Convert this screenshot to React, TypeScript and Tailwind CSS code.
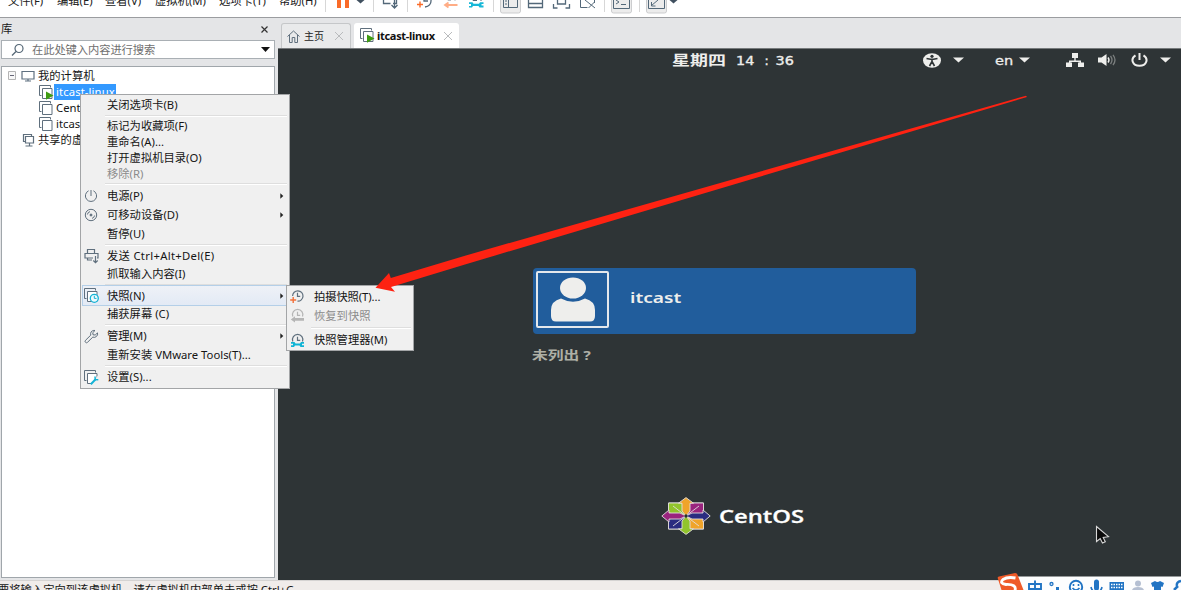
import type { ReactNode } from "react";

const slate = "#5f6f7d";

function Stack({ mark }: { mark?: "play" | "clock" | "wrench" }) {
  return (
    <svg width="15" height="15" viewBox="0 0 15 15" fill="none" stroke={slate} className="block shrink-0">
      <path d="M2.500 10.500H.500V.500h11v2" />
      <path d="M3.500 3.500h9.500v10H3.500z" fill="#fff" />
      {mark === "play" && <path d="M7 6.500l7.500 4L7 14.700z" fill="#3f9c12" stroke="none" />}
      {mark === "clock" && (
        <>
          <circle cx="10.3" cy="10.3" r="4" fill="#eefafd" stroke="#14b3d6" strokeWidth="1.3" />
          <path d="M10.3 7.8v2.6h2.2" stroke="#14b3d6" />
        </>
      )}
      {mark === "wrench" && (
        <>
          <path d="M14.5 5v10H6z" fill="#f0f0f0" stroke="none" />
          <path d="M6.8 14.2l4.8-5" stroke="#14b3d6" strokeWidth="2" />
          <path d="M11 6.5l.3 3 3 .3" stroke="#14b3d6" strokeWidth="1.5" />
        </>
      )}
    </svg>
  );
}

function Clock({ kind }: { kind: "plus" | "back" | "wrench" }) {
  const c = kind === "back" ? "#b5b5b5" : slate;
  return (
    <svg width="15" height="15" viewBox="0 0 15 15" fill="none" className="block">
      {kind === "plus" ? (
        <path d="M2.600 7A5.200 5.200 0 1 1 7.500 12.200" stroke={c} strokeWidth="1.2" />
      ) : (
        <path d="M2.800 8.500A5.200 5.200 0 1 1 12.500 8.500" stroke={c} strokeWidth="1.2" />
      )}
      <path d="M7.500 3.800v3.600h2.700" stroke={c} strokeWidth="1.2" />
      {kind === "plus" && <path d="M3.2 8v6M.2 11h6" stroke="#f2703a" strokeWidth="1.4" />}
      {kind === "back" && <path d="M14 10H5V8.300L.8 11.500 5 14.500v-1.800h9z" fill="#b5b5b5" />}
      {kind === "wrench" && (
        <path d="M1 9h3.500l1 1.400h4.500l1-1.400h3v1.800h-2v1.400h2v1.800h-3.500l-1-1.400H5l-1 1.400H1v-1.800h2v-1.400H1z" fill="#10b4d5" />
      )}
    </svg>
  );
}

function PowerIcon() {
  return (
    <svg width="14" height="14" viewBox="0 0 14 14" fill="none" stroke={slate} className="block">
      <path d="M4.600 1.800a5.600 5.600 0 1 0 4.800 0M7 1v6" />
    </svg>
  );
}

function DiscIcon() {
  return (
    <svg width="14" height="14" viewBox="0 0 14 14" fill="none" stroke={slate} className="block">
      <circle cx="7" cy="7" r="5.700" />
      <circle cx="7" cy="7" r="1" fill={slate} />
      <path d="M3.400 6.500A3.600 3.600 0 0 1 6 3.600M10.600 7.500A3.600 3.600 0 0 1 8 10.400" />
    </svg>
  );
}

function SendIcon() {
  return (
    <svg width="15" height="16" viewBox="0 0 15 16" fill="none" stroke={slate} strokeWidth="1.200" className="block">
      <path d="M3.500 5.500v-4h7v4M9 10H1V5.500h13V10h-1M11.500 8v6.500M9.300 12.500l2.200 2.200 2.200-2.200M3.500 10v2h4.500" />
    </svg>
  );
}

function WrenchIcon() {
  return (
    <svg width="15" height="15" viewBox="0 0 15 15" fill="none" stroke={slate} className="block">
      <path d="M9.800 1.400a3.500 3.500 0 0 0-3 4.700L1.500 11.300a1.400 1.400 0 0 0 2 2L8.800 8.100a3.500 3.500 0 0 0 4.700-4.200L11.200 6 9 5.800 8.800 3.600l2.200-2.100z" />
    </svg>
  );
}

function Item({
  h,
  icon,
  arrow,
  off,
  hot,
  tone = "",
  children,
}: {
  h: string;
  icon?: ReactNode;
  arrow?: boolean;
  off?: boolean;
  hot?: boolean;
  tone?: string;
  children: ReactNode;
}) {
  return (
    <div
      className={`flex shrink-0 items-center ${h} ${
        hot ? "bg-linear-to-b from-[#eef1f7] to-[#e3eaf5] shadow-[0_0_0_1px_#b4cfe8]" : ""
      }`}
    >
      <div className="flex w-6 shrink-0 items-center pl-px">{icon}</div>
      <div className={`min-w-0 flex-1 ${off ? "text-[#8b8b8b]" : "text-[#151515]"} ${tone}`}>
        <span className="whitespace-nowrap">{children}</span>
      </div>
      {arrow && (
        <svg width="4" height="6" viewBox="0 0 4 6" className="mr-[3px]">
          <path d="M.300.300l3 2.700-3 2.700z" fill="#222" />
        </svg>
      )}
    </div>
  );
}

function Sep({ h }: { h: string }) {
  return (
    <div className={`flex shrink-0 items-center ${h}`}>
      <div className="ml-[22px] h-[2px] flex-1 border-t border-[#dedede] bg-white" />
    </div>
  );
}

function ContextMenu() {
  return (
    <div className="absolute left-[80px] top-[94px] flex h-[295px] w-[210px] flex-col border border-[#a3a5a7] bg-[#f0f0f0] px-[2px] pt-px">
      <Item h="h-[17px]">关闭选项卡(B)</Item>
      <Sep h="h-[5px]" />
      <Item h="h-[16px]">标记为收藏项(F)</Item>
      <Item h="h-[16px]">重命名(A)...</Item>
      <Item h="h-[16px]">打开虚拟机目录(O)</Item>
      <Item h="h-[16px]" off>移除(R)</Item>
      <Sep h="h-[4px]" />
      <Item h="h-[19px]" icon={<PowerIcon />} arrow>电源(P)</Item>
      <Item h="h-[20px]" icon={<DiscIcon />} arrow>可移动设备(D)</Item>
      <Item h="h-[17px]">暂停(U)</Item>
      <Sep h="h-[5px]" />
      <Item h="h-[18px]" icon={<SendIcon />} tone="tracking-[0.3px]">发送 Ctrl+Alt+Del(E)</Item>
      <Item h="h-[18px]">抓取输入内容(I)</Item>
      <Sep h="h-[3px]" />
      <Item h="h-[19px]" icon={<Stack mark="clock" />} arrow hot>快照(N)</Item>
      <Item h="h-[18px]">捕获屏幕 (C)</Item>
      <Sep h="h-[4px]" />
      <Item h="h-[18px]" icon={<WrenchIcon />} arrow>管理(M)</Item>
      <Item h="h-[19px]">重新安装 VMware Tools(T)...</Item>
      <Sep h="h-[4px]" />
      <Item h="h-[18px]" icon={<Stack mark="wrench" />}>设置(S)...</Item>
    </div>
  );
}

function SubMenu() {
  return (
    <div className="absolute left-[286px] top-[285px] flex h-[66px] w-[128px] flex-col border border-[#a3a5a7] bg-[#f0f0f0] px-[2px] pt-px">
      <Item h="h-[19px]" tone="pl-px tracking-[-0.1px]" icon={<Clock kind="plus" />}>拍摄快照(T)...</Item>
      <Item h="h-[19px]" tone="pl-px" off icon={<Clock kind="back" />}>恢复到快照</Item>
      <Sep h="h-[6px]" />
      <Item h="h-[18px]" tone="pl-px" icon={<Clock kind="wrench" />}>快照管理器(M)</Item>
    </div>
  );
}

function MenuBar() {
  return (
    <header className="flex h-[18px] shrink-0 overflow-hidden border-b border-[#9b9da0] bg-white">
      <nav className="-mt-[8px] flex h-[18px] w-[320px] shrink-0 items-center whitespace-nowrap pl-[8px] text-[#202020]">
        <span className="w-[49px]">文件(F)</span>
        <span className="w-[48px]">编辑(E)</span>
        <span className="w-[50px]">查看(V)</span>
        <span className="w-[64px]">虚拟机(M)</span>
        <span className="w-[60px]">选项卡(T)</span>
        <span>帮助(H)</span>
      </nav>
      <svg width="380" height="17" viewBox="320 0 380 17" fill="none" stroke="#536879" className="block shrink-0">
        <path d="M325.500 0v12M373.500 0v12M407.500 0v12M493.500 0v12M604.500 0v12M639.500 0v12" stroke="#d7d7d7" />
        <path d="M337 0h4v8h-4zM345 0h4v8h-4z" fill="#fa6b28" stroke="none" />
        <path d="M356.500 0h8L360.500 3.500z" fill="#405060" stroke="none" />
        <path d="M383.500 0v3.500h7M393 3.500h3.500V0M394.500 0v7.500M391.500 5l3 3 3-3" strokeWidth="1.300" />
        <path d="M425 7q6.500-1 6-7M424 0v1h4" strokeWidth="1.300" />
        <path d="M420 1.500v6M417 4.500h6" stroke="#fa6b28" strokeWidth="1.400" />
        <path d="M457.500 5H446M448.500 2.500L445 5l3.500 2.500" stroke="#ffad86" strokeWidth="1.800" />
        <path d="M448 0v.5h3M455 0v1" stroke="#b8c0c8" />
        <path d="M469 2.300h3.500l1 1.500h5.500l1-1.500h3.500v1.700h-2v1.500h2v2h-4l-1-1.500H473l-1 1.500h-3V6h2V4h-2z" fill="#17b8d8" stroke="none" />
        <path d="M473 0v.5h4M481 0v1" />
        <path d="M500.500-2v13a2 2 0 0 0 2 2h16a2 2 0 0 0 2-2V-2z" fill="#ececec" stroke="#cccdcf" />
        <path d="M503.500-2v9.500h14V-2M508.500-2v9.500M505 1h2M505 4h2" />
        <path d="M528.500-2v9.500h14V-2M528.500 3.500h14" strokeWidth="1.300" />
        <path d="M553.500 4v4h4M569.500 4v4h-4M557.500-2v6h8v-6" strokeWidth="1.300" />
        <path d="M587.500 7.500h-7V-2M585 0l10 8M594.500 0v3M594.500 2l-6 6" />
        <path d="M611.500-2v13a2 2 0 0 0 2 2h16a2 2 0 0 0 2-2V-2z" fill="#ececec" stroke="#cccdcf" />
        <path d="M613.500-2v10.500h16V-2M616 0l3 2-3 2M621 4.500h5" />
        <path d="M646.500-2v13a2 2 0 0 0 2 2h16a2 2 0 0 0 2-2V-2z" fill="#ececec" stroke="#cccdcf" />
        <path d="M648.500-2v10.500h16V-2M651.500 5.500L658 0M651.500 2v4h4" />
        <path d="M669.500 0h8l-4 3.500z" fill="#405060" stroke="none" />
      </svg>
    </header>
  );
}

function Library() {
  return (
    <aside className="flex w-[278px] shrink-0 flex-col pb-[2px] pl-px pr-[3px]">
      <div className="flex h-[22px] items-center justify-between pr-[6px] text-[#202020]">
        <span>库</span>
        <svg width="9" height="9" viewBox="0 0 9 9" stroke="#333" strokeWidth="1.200">
          <path d="M1.500 1.500l6 6M7.500 1.500l-6 6" />
        </svg>
      </div>
      <div className="flex h-[19px] shrink-0 items-center border border-[#a9afb4] bg-white pl-[9px] pr-[4px]">
        <svg width="14" height="14" viewBox="0 0 14 14" fill="none" stroke="#546675" strokeWidth="1.200">
          <circle cx="8" cy="5.500" r="4" />
          <path d="M5 8.500L1 12.500" />
        </svg>
        <span className="ml-[7px] flex-1 tracking-[-0.1px] text-[#707070]">在此处键入内容进行搜索</span>
        <svg width="9" height="5" viewBox="0 0 9 5">
          <path d="M0 0h9L4.500 5z" fill="#111" />
        </svg>
      </div>
      <div className="mt-[7px] flex min-h-0 flex-1 flex-col border border-[#a0a6ab] bg-white">
        <div className="flex h-[17px] items-center pl-[6px]">
          <svg width="9" height="9" viewBox="0 0 9 9" fill="#f8f8f8" stroke="#b5b5b5">
            <path d="M.500.500h7v8h-7z" />
            <path d="M2 4.500h4" stroke="#667" />
          </svg>
          <svg width="14" height="12" viewBox="0 0 14 12" fill="none" stroke="#5f7080" className="ml-[4px]">
            <path d="M1 1.500h12v7.500H1zM4 11h6M7 9v2" strokeWidth="1.200" />
          </svg>
          <span className="ml-[3px]">我的计算机</span>
        </div>
        <div className="flex h-[16px] items-center pl-[37px]">
          <Stack mark="play" />
          <span className="h-[16px] w-[62px] whitespace-nowrap bg-[#3399ff] pl-[2px] leading-[15px] tracking-[0.1px] text-white">itcast-linux</span>
        </div>
        <div className="flex h-[16px] items-center pl-[37px]">
          <Stack />
          <span className="ml-[2px]">CentOS 7</span>
        </div>
        <div className="flex h-[16px] items-center pl-[37px]">
          <Stack />
          <span className="ml-[2px]">itcast</span>
        </div>
        <div className="flex h-[16px] items-center pl-[20px]">
          <svg width="13" height="14" viewBox="0 0 13 14" fill="none" stroke={slate} strokeWidth="1.200">
            <path d="M3.500 8.500h-2V1.500h8v2M3.500 3.500h8v6.500h-8zM7.500 10v2.500M3.500 13h7" />
          </svg>
          <span className="ml-[3px]">共享的虚拟机</span>
        </div>
      </div>
    </aside>
  );
}

function HomeIcon() {
  return (
    <svg width="13" height="13" viewBox="0 0 13 13" fill="none" stroke={slate}>
      <path d="M.500 6.500L6.500 1l6 5.500M2.500 5v7.500h2.700V7.500h2.600v5h2.700V5" />
    </svg>
  );
}

function CloseX() {
  return (
    <svg width="10" height="10" viewBox="0 0 10 10" stroke="#b9bbbd">
      <path d="M1 1l8 8M9 1L1 9" />
    </svg>
  );
}

function Tabs() {
  return (
    <div className="flex h-[30px] shrink-0 items-end">
      <div className="ml-[3px] flex h-[25px] w-[70px] items-center rounded-t-[3px] border border-b-0 border-[#c5c7c9] bg-[#e9eaeb] pl-[5px] text-[#222]">
        <HomeIcon />
        <span className="ml-[4px] flex-1 text-[10px]">主页</span>
        <span className="mr-[6px]"><CloseX /></span>
      </div>
      <div className="ml-[3px] flex h-[25px] w-[105px] items-center rounded-t-[3px] bg-white pl-[6px]">
        <Stack mark="play" />
        <span className="ml-[2px] flex-1 text-[11px] font-bold tracking-[-0.300px] text-[#111]">itcast-linux</span>
        <span className="mr-[6px]"><CloseX /></span>
      </div>
    </div>
  );
}

function Caret() {
  return (
    <svg width="11" height="6" viewBox="0 0 11 6" className="block shrink-0">
      <path d="M0 .500h11L5.500 5.500z" fill="#eeeeec" />
    </svg>
  );
}

function CentLogo() {
  return (
    <svg width="50" height="38" viewBox="0 0 50 38" className="block" stroke="#e2dedd" strokeWidth=".9">
      <path d="M7.500 6H42.500V32H7.500z" fill="#2e3436" />
      <path d="M7.500 6H21L25 19 7.500 16z" fill="#91c42c" />
      <path d="M29 6h13.500v10L25 19z" fill="#9a247e" />
      <path d="M7.500 22L25 19l-4 13H7.500z" fill="#2b2c80" />
      <path d="M25 19l17.500 3v10H29z" fill="#f0a42a" />
      <path d="M25 19l-4-5V6.200h-3.500L25 .6l7.500 5.600H29V14z" fill="#f0a42a" />
      <path d="M25 19l-4 5v7.800h-3.500L25 37.400l7.500-5.600H29V24z" fill="#91c42c" />
      <path d="M25 19l-6-3H8v-3L.8 19 8 25v-3h11z" fill="#9a247e" />
      <path d="M25 19l6-3h11v-3l7.200 6-7.200 6v-3H31z" fill="#2b2c80" />
      <path d="M12 9l13 10L38 9M12 29l13-10 13 10" fill="none" />
      <circle cx="25" cy="19" r="1.700" fill="#26312f" stroke="none" />
    </svg>
  );
}

function GuestScreen() {
  return (
    <section className="flex min-h-0 flex-1 flex-col border-t border-[#767a7c] bg-[#2e3436] text-[#eeeeec]">
      <div className="flex h-[22px] shrink-0 items-center">
        <div className="ml-[394px] flex w-[251px] items-center whitespace-nowrap">
          <span className="inline-block w-[64px] origin-left scale-x-[1.33] text-[13.500px] font-bold leading-[21px]">星期四</span>
          <span className="flex w-[58px] justify-between font-['DejaVu_Sans'] text-[12.500px] leading-[21px] [-webkit-text-stroke:0.350px_#eeeeec]">
            <span className="inline-block origin-left scale-x-[1.150]">14</span>
            <span className="pl-[3px]">:</span>
            <span className="inline-block origin-right scale-x-[1.150]">36</span>
          </span>
        </div>
        <svg width="18" height="15" viewBox="0 0 18 15" className="block">
          <ellipse cx="9" cy="7.500" rx="9" ry="7.300" fill="#eeeeec" />
          <circle cx="9" cy="3.300" r="1.600" fill="#2e3436" />
          <path d="M3.500 5.500l4 .8h3l4-.8M9 6v3.500M9 8.500L6.500 13M9 8.500l2.500 4.500" stroke="#2e3436" strokeWidth="1.600" fill="none" />
        </svg>
        <span className="ml-[12px]"><Caret /></span>
        <span className="ml-[31px] w-[21px] origin-left font-['DejaVu_Sans'] text-[13px] leading-none [-webkit-text-stroke:0.300px_#eeeeec] scale-x-[1.120]">en</span>
        <span className="ml-[3px]"><Caret /></span>
        <svg width="18" height="14" viewBox="0 0 18 14" className="ml-[36px] block" fill="#eeeeec">
          <path d="M6 0h6v5H9.700v2.500H15v2h3V14h-6V9.500h1.500V9h-9v.5H6V14H0V9.500h3v-2h5.300V5H6z" />
        </svg>
        <svg width="18" height="12" viewBox="0 0 18 12" className="ml-[14px] block" fill="none" stroke="#eeeeec">
          <path d="M0 3.500h3.500L8.500 0v12l-5-3.500H0z" fill="#eeeeec" stroke="none" />
          <path d="M10 3.500q2 2.500 0 5" strokeWidth="1.400" />
          <path d="M12.500 2q3 4 0 8M15 .8q4 5.200 0 10.400" opacity=".4" strokeWidth="1.300" />
        </svg>
        <svg width="17" height="14" viewBox="0 0 17 14" className="ml-[15px] block" fill="none" stroke="#eeeeec" strokeWidth="2">
          <path d="M4.500 2.300C-1 6 1.500 12.800 8.500 12.800S18 6 12.500 2.300M8.500 0v7" />
        </svg>
        <span className="ml-[12px]"><Caret /></span>
      </div>
      <div className="ml-[255px] mt-[197px] flex h-[66px] w-[383px] shrink-0 items-center rounded-[4px] bg-[#215d9c] pl-[3px]">
        <div className="mb-[4px] flex h-[57px] w-[73px] items-center justify-center rounded-[2px] border-2 border-[#e4e8ec]">
          <svg width="44" height="45" viewBox="0 0 44 45" fill="#eeeeec">
            <ellipse cx="22" cy="11" rx="13" ry="10.500" />
            <path d="M0 39V33Q0 24 10 21.500Q22 28 34 21.500Q44 24 44 33V39Q44 44.500 39 44.500H5Q0 44.500 0 39Z" />
          </svg>
        </div>
        <span className="mb-[7px] ml-[21px] inline-block origin-left scale-x-[1.280] font-['Noto_Sans'] text-[15px] font-semibold">itcast</span>
      </div>
      <div className="ml-[254px] mt-[12px] h-[20px] shrink-0 whitespace-nowrap text-[#aeb0a6]">
        <span className="inline-block origin-left scale-x-[1.260] text-[12.500px] font-bold leading-[20px]">未列出 ?</span>
      </div>
      <div className="mt-[131px] flex h-[38px] shrink-0 items-center pl-[383px]">
        <CentLogo />
        <span className="ml-[8px] inline-block origin-left scale-x-[1.320] font-['Open_Sans'] text-[18px] font-semibold leading-none text-white [-webkit-text-stroke:0.3px_#fff]">CentOS</span>
      </div>
    </section>
  );
}

function InputTray() {
  return (
    <svg width="186" height="18" viewBox="995 572 186 18" className="absolute left-[995px] top-[572px]" fill="none" stroke="#2274c4" strokeWidth="1.600">
      <path d="M1018 576.500h163V590h-163z" fill="#fdfdfe" stroke="none" />
      <path d="M998 579q-1-2 1-2.500l15-3.300q3-.5 3.500 1.500l6 15.300h-22z" fill="#ef5a28" stroke="none" />
      <path d="M1015.500 578q-8-1.500-12.500 1.500-4 4 3 5 11-.5 9 6" stroke="#fff" strokeWidth="2.800" />
      <path d="M1029 584h12v5h-12zM1035 580.500v10" strokeWidth="1.900" />
      <circle cx="1051.500" cy="584" r="1.500" strokeWidth="1.300" />
      <path d="M1057.500 587v3" strokeWidth="3" />
      <circle cx="1076" cy="587" r="6.200" strokeWidth="1.900" />
      <path d="M1073.500 584v2M1078.500 584v2M1072.500 588q3.500 4 7 0" />
      <path d="M1096.500 582v6" strokeWidth="5" strokeLinecap="round" />
      <path d="M1091 587q1 5 5.500 5t5.500-5" />
      <path d="M1109.500 582h14.500v10h-14.500z" fill="#2274c4" stroke="none" />
      <path d="M1111 584.500h12M1111 587.500h12" stroke="#fff" strokeDasharray="1.500 1" strokeWidth="1.300" />
      <circle cx="1138" cy="583.500" r="3" fill="#b5bfd2" stroke="none" />
      <path d="M1132 590q1-3 6-3t6 3z" fill="#b5bfd2" stroke="none" />
      <path d="M1151 583l4-2q2.500 2 5 0l4 2-1.500 4-1.500-.5v4h-7v-4l-1.500.5z" fill="#2274c4" stroke="none" />
      <path d="M1174 590l4-4M1181 581q-5 1-4 5" strokeWidth="2.500" />
    </svg>
  );
}

export default function App() {
  return (
    <div className="relative flex h-[590px] w-[1181px] flex-col overflow-hidden bg-[#e4e5e7] font-['Noto_Sans','Noto_Sans_CJK_SC',sans-serif] text-[11.300px] leading-none text-[#151515]">
      <MenuBar />
      <div className="flex h-[562px] shrink-0">
        <Library />
        <main className="flex min-w-0 flex-1 flex-col">
          <Tabs />
          <GuestScreen />
        </main>
      </div>
      <footer className="h-[10px] shrink-0 overflow-hidden border-t border-[#d5d3d2] bg-[#f0ecea]">
        <div className="-ml-[2px] mt-px whitespace-nowrap leading-[16px]">要将输入定向到该虚拟机，请在虚拟机内部单击或按 Ctrl+G。</div>
      </footer>
      <ContextMenu />
      <SubMenu />
      <svg width="1181" height="590" viewBox="0 0 1181 590" className="pointer-events-none absolute left-0 top-0">
        <path d="M375.500 287.800L389 273l1.800 5L465 255.700 1026 95.700l1 1.300L465 264.500 391 287l4 4.700z" fill="#fe2212" />
        <path d="M1096.500 526.500v15l3.700-3 2.300 4.500 2.800-1.300-2.100-4.200 5.300-.8z" fill="#0b0b0b" stroke="#d8d8d8" strokeWidth="1.100" />
      </svg>
      <InputTray />
    </div>
  );
}
